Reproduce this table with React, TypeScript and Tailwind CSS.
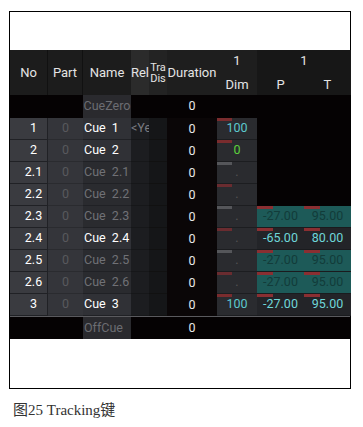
import React from 'react'

type PT = { p: string; t: string; teal: boolean }
type Row = {
  no: string
  name: string
  tracked: boolean
  rel?: string
  dim: string
  dimColor: string
  bar: string
  pt?: PT
}

const rows: Row[] = [
  { no: '1', name: 'Cue\u00a0\u00a01', tracked: true, rel: '<Ye', dim: '100', dimColor: 'text-[#5cc8cc]', bar: 'bg-[#7a2c2e]' },
  { no: '2', name: 'Cue\u00a0\u00a02', tracked: true, dim: '0', dimColor: 'text-[#5ccf3c]', bar: 'bg-[#7a2c2e]' },
  { no: '2.1', name: 'Cue\u00a0\u00a02.1', tracked: false, dim: '.', dimColor: 'text-[#555]', bar: 'bg-[#55565a]' },
  { no: '2.2', name: 'Cue\u00a0\u00a02.2', tracked: false, dim: '.', dimColor: 'text-[#555]', bar: 'bg-[#6a2c30]' },
  { no: '2.3', name: 'Cue\u00a0\u00a02.3', tracked: false, dim: '.', dimColor: 'text-[#555]', bar: 'bg-[#55565a]', pt: { p: '-27.00', t: '95.00', teal: true } },
  { no: '2.4', name: 'Cue\u00a0\u00a02.4', tracked: true, dim: '.', dimColor: 'text-[#555]', bar: 'bg-[#6a2c30]', pt: { p: '-65.00', t: '80.00', teal: false } },
  { no: '2.5', name: 'Cue\u00a0\u00a02.5', tracked: false, dim: '.', dimColor: 'text-[#555]', bar: 'bg-[#55565a]', pt: { p: '-27.00', t: '95.00', teal: true } },
  { no: '2.6', name: 'Cue\u00a0\u00a02.6', tracked: false, dim: '.', dimColor: 'text-[#555]', bar: 'bg-[#6a2c30]', pt: { p: '-27.00', t: '95.00', teal: true } },
  { no: '3', name: 'Cue\u00a0\u00a03', tracked: true, dim: '100', dimColor: 'text-[#5cc8cc]', bar: 'bg-[#7a2c2e]', pt: { p: '-27.00', t: '95.00', teal: false } },
]

const cols = 'grid grid-cols-[38px_35px_48px_18px_18px_50px_40px_47px_47px]'

function PTCell({ v, teal }: { v: string; teal: boolean }) {
  return (
    <div
      className={
        'relative flex items-center justify-center border-b border-[#1a1b1e] ' +
        (teal ? 'bg-[#1d5a58] text-[#123c3a]' : 'bg-[#232428] text-[#6fd6d8]')
      }
    >
      <span className="absolute left-0 top-0 h-[3px] w-[16px] bg-[#8a2f32]" />
      {v}
    </div>
  )
}

export default function App() {
  return (
    <div className="w-[363px] h-[427px] bg-white font-['Roboto',sans-serif]">
      <div className="pt-[11px] pl-[9px]">
        <div className="w-[342px] h-[378px] border border-black flex flex-col">
          <div className="h-[38px]" />
          <div className="bg-[#050203] text-[12.5px]">
            {/* header */}
            <div className={cols + ' h-[45px] text-[#e4e4e4] text-[13px]'}>
              <div className="bg-[#1c1c1c] border-r border-[#111] flex items-center justify-center">No</div>
              <div className="bg-[#1c1c1c] border-r border-[#111] flex items-center justify-center">Part</div>
              <div className="bg-[#1c1c1c] flex items-center justify-center">Name</div>
              <div className="bg-[#2b2b2b] flex items-center justify-center">Rel</div>
              <div className="bg-[#232323] flex flex-col items-center justify-center text-[11px] leading-[11px] overflow-hidden">
                <span>Tra</span>
                <span>Dis</span>
              </div>
              <div className="bg-[#1e1e1e] flex items-center justify-center">Duration</div>
              <div className="bg-[#1e1e1e] flex flex-col items-center pt-[4px] leading-none">
                <span>1</span>
                <span className="mt-[11px]">Dim</span>
              </div>
              <div className="col-span-2 bg-[#171717] flex flex-col leading-none pt-[4px]">
                <span className="text-center">1</span>
                <div className="grid grid-cols-2 mt-[11px]">
                  <span className="text-center">P</span>
                  <span className="text-center">T</span>
                </div>
              </div>
            </div>

            {/* CueZero */}
            <div className={cols + ' h-[23px]'}>
              <div />
              <div />
              <div className="bg-[#2a2a2e] text-[#6c6d72] flex items-center justify-center">CueZero</div>
              <div />
              <div />
              <div className="text-[#e8e8e8] flex items-center justify-center">0</div>
              <div />
              <div />
              <div />
            </div>

            {rows.map((r) => (
              <div key={r.no} className={cols + ' h-[22px]'}>
                <div className="bg-[#3a3b40] border-b border-r border-[#202125] text-white flex items-center justify-center pl-[10px]">
                  {r.no}
                </div>
                <div className="bg-[#34353a] border-b border-[#2a2b2f] text-[#58595d] flex items-center justify-center">0</div>
                <div
                  className={
                    'border-b border-[#202125] flex items-center pl-[1px] whitespace-nowrap ' +
                    (r.tracked ? 'bg-[#303136] text-white' : 'bg-[#2a2b2f] text-[#707176]')
                  }
                >
                  {r.name}
                </div>
                <div className="bg-[#1c1d20] border-b border-[#161719] text-[#7a7b80] flex items-center overflow-hidden whitespace-nowrap">
                  {r.rel ?? ''}
                </div>
                <div className="bg-[#151618] border-b border-[#111]" />
                <div className="bg-[#0a0607] text-[#e8e8e8] flex items-center justify-center">0</div>
                <div className={'relative bg-[#2a2b2f] border-b border-[#1c1d20] flex items-center justify-center ' + r.dimColor}>
                  <span className={'absolute left-0 top-0 h-[3px] w-[15px] ' + r.bar} />
                  {r.dim}
                </div>
                {r.pt ? (
                  <>
                    <PTCell v={r.pt.p} teal={r.pt.teal} />
                    <PTCell v={r.pt.t} teal={r.pt.teal} />
                  </>
                ) : (
                  <>
                    <div />
                    <div />
                  </>
                )}
              </div>
            ))}

            {/* OffCue */}
            <div className={cols + ' h-[23px] border-t border-[#5a5a5e]'}>
              <div />
              <div />
              <div className="bg-[#2a2a2e] text-[#6c6d72] flex items-center pl-[1px]">OffCue</div>
              <div />
              <div />
              <div className="text-[#e8e8e8] flex items-center justify-center">0</div>
              <div />
              <div />
              <div />
            </div>
          </div>
        </div>
      </div>
      <div className="pl-[13px] pt-[10px] text-[15px] text-[#333] font-['Liberation_Serif','Noto_Sans_CJK_SC',serif]">
        图25 Tracking键
      </div>
    </div>
  )
}
